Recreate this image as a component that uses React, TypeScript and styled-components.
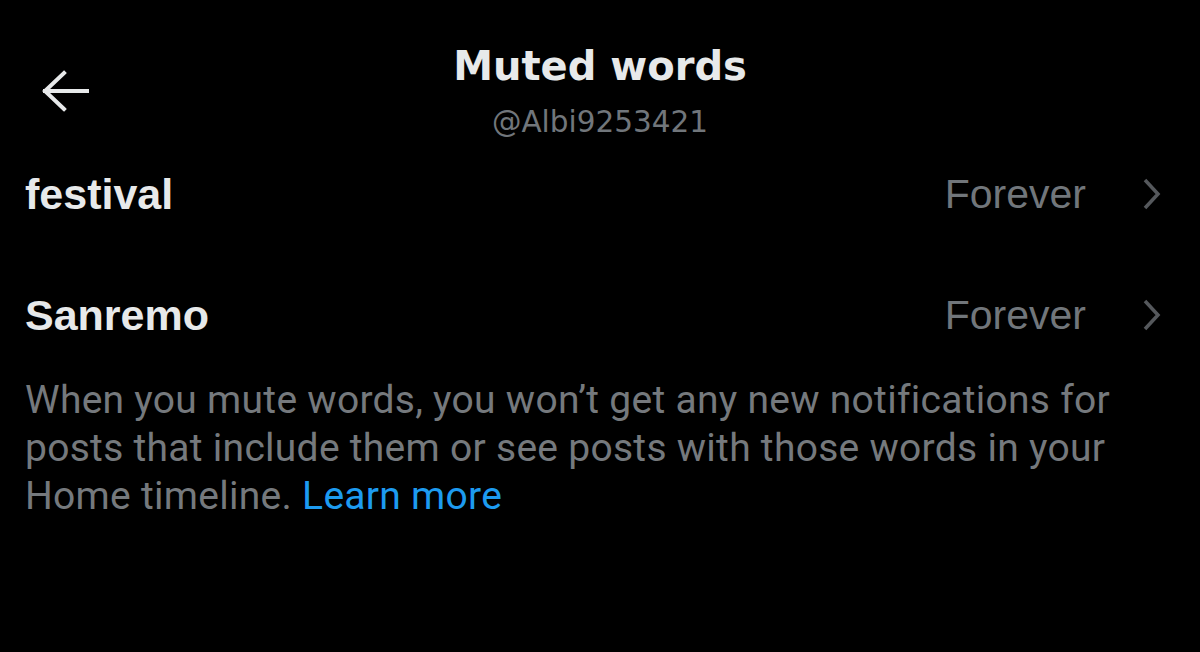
import styled, { createGlobalStyle } from "styled-components";

const GlobalStyle = createGlobalStyle`
  html, body {
    margin: 0;
    padding: 0;
    background: #000;
  }
  body {
    width: 1200px;
    height: 652px;
    overflow: hidden;
  }
`;

const Screen = styled.div`
  width: 1200px;
  height: 652px;
  background: #000;
  display: flex;
  flex-direction: column;
`;

const Header = styled.header`
  display: grid;
  grid-template-columns: 1fr auto 1fr;
  align-items: start;
  padding-top: 44px;
`;

const BackButton = styled.button`
  justify-self: start;
  margin: 26px 0 0 41px;
  padding: 0;
  border: none;
  background: none;
  width: 48px;
  height: 42px;
  display: flex;
`;

const TitleBlock = styled.div`
  display: flex;
  flex-direction: column;
  align-items: center;
  gap: 14px;
`;

const Title = styled.h1`
  margin: 0;
  font-family: "DejaVu Sans", sans-serif;
  font-weight: 700;
  font-size: 40px;
  line-height: 44px;
  color: #e7e9ea;
`;

const Handle = styled.div`
  font-family: "DejaVu Sans", sans-serif;
  font-size: 29.5px;
  line-height: 40px;
  color: #71767b;
`;

const List = styled.div`
  display: flex;
  flex-direction: column;
  gap: 71px;
  padding: 27px 39px 0 25px;
`;

const Row = styled.div`
  display: flex;
  align-items: center;
  height: 50px;
`;

const Word = styled.span`
  flex: 1;
  font-family: "Liberation Sans", Arial, sans-serif;
  font-weight: 700;
  font-size: 43px;
  line-height: 50px;
  color: #e7e9ea;
`;

const Duration = styled.span`
  font-family: "Liberation Sans", Arial, sans-serif;
  font-size: 41px;
  line-height: 50px;
  color: #71767b;
  margin-right: 57px;
`;

const Paragraph = styled.p`
  margin: 36px 0 0;
  padding: 0 0 0 25px;
  max-width: 1120px;
  font-family: Roboto, sans-serif;
  font-size: 39px;
  line-height: 48px;
  letter-spacing: 0.28px;
  color: #75797d;
`;

const Link = styled.a`
  color: #1d9bf0;
  text-decoration: none;
`;

const words = [
  { word: "festival", duration: "Forever" },
  { word: "Sanremo", duration: "Forever" },
];

function BackArrow() {
  return (
    <svg width="48" height="42" viewBox="0 0 48 42" fill="none">
      <path
        d="M23 3 L4 21 L23 39 M4 21 H46"
        stroke="#e7e9ea"
        strokeWidth="4"
        strokeLinecap="square"
      />
    </svg>
  );
}

function Chevron() {
  return (
    <svg width="18" height="32" viewBox="0 0 18 32" fill="none">
      <path d="M2 2 L15 16 L2 30" stroke="#55585c" strokeWidth="3.5" />
    </svg>
  );
}

function App() {
  return (
    <Screen>
      <GlobalStyle />
      <Header>
        <BackButton aria-label="Back">
          <BackArrow />
        </BackButton>
        <TitleBlock>
          <Title>Muted words</Title>
          <Handle>@Albi9253421</Handle>
        </TitleBlock>
        <div />
      </Header>
      <List>
        {words.map((w) => (
          <Row key={w.word}>
            <Word>{w.word}</Word>
            <Duration>{w.duration}</Duration>
            <Chevron />
          </Row>
        ))}
      </List>
      <Paragraph>
        When you mute words, you won’t get any new notifications for posts
        that include them or see posts with those words in your Home timeline.{" "}
        <Link href="#">Learn more</Link>
      </Paragraph>
    </Screen>
  );
}

export default App;
